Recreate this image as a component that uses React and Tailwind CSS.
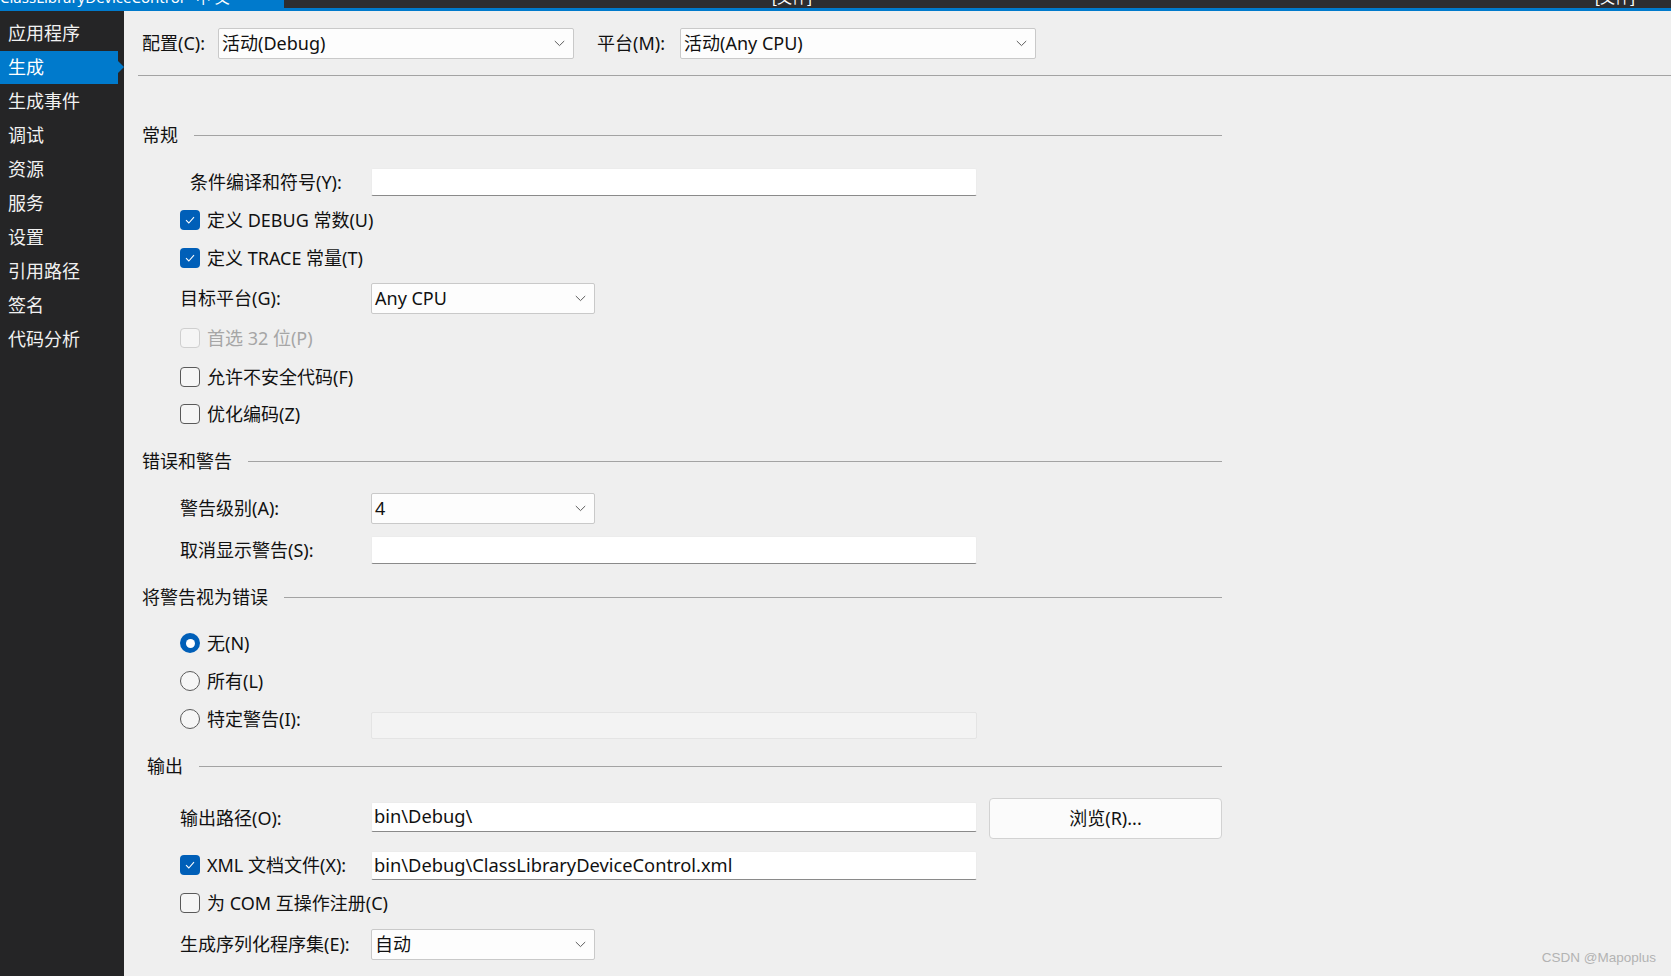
import React from "react";

const FONT = { fontFamily: '"Noto Sans", "Noto Sans CJK SC", sans-serif' };

function Chevron() {
  return (
    <svg width="11" height="7" viewBox="0 0 11 7" className="shrink-0">
      <path d="M0.8 1 L5.5 5.6 L10.2 1" fill="none" stroke="#5c5c5c" strokeWidth="1" />
    </svg>
  );
}

function Dropdown({ value, w, h = 31 }) {
  return (
    <div
      className="flex items-center justify-between bg-[#fdfdfd] border border-[#c9c9c9] rounded-[2px] pl-[3px] pr-[8px]"
      style={{ width: w, height: h }}
    >
      <span className="text-[18px] text-[#111]">{value}</span>
      <Chevron />
    </div>
  );
}

function TextInput({ value = "", h = 28, disabled = false }) {
  return (
    <div
      className={
        disabled
          ? "w-[606px] flex items-center bg-[#f3f3f3] border border-[#e4e4e4] rounded-[2px]"
          : "w-[606px] flex items-center bg-white border border-[#ececec] border-b-[#8a8a8a] rounded-[2px] pl-[2px]"
      }
      style={{ height: h }}
    >
      <span className="text-[18.3px] text-[#111] leading-none">{value}</span>
    </div>
  );
}

function Checkbox({ checked, disabled }) {
  if (checked) {
    return (
      <div className="w-[20px] h-[20px] rounded-[4px] bg-[#005fb8] flex items-center justify-center shrink-0">
        <svg width="12" height="10" viewBox="0 0 12 10">
          <path d="M2 5.2 L4.8 8 L10 2.2" fill="none" stroke="white" strokeWidth="1.1" />
        </svg>
      </div>
    );
  }
  return (
    <div
      className={
        disabled
          ? "w-[20px] h-[20px] rounded-[4px] border border-[#cfcfcf] bg-[#f5f5f5] shrink-0"
          : "w-[20px] h-[20px] rounded-[4px] border border-[#5a5a5a] bg-[#f6f6f6] shrink-0"
      }
    />
  );
}

function Radio({ checked }) {
  if (checked) {
    return (
      <div className="w-[20px] h-[20px] rounded-full bg-[#005fb8] flex items-center justify-center shrink-0">
        <div className="w-[9px] h-[9px] rounded-full bg-white" />
      </div>
    );
  }
  return <div className="w-[20px] h-[20px] rounded-full border border-[#5a5a5a] bg-[#f6f6f6] shrink-0" />;
}

function Heading({ text, className = "", indent = 0 }) {
  return (
    <div className={"flex items-center h-[30px] " + className}>
      <span className="text-[18px] text-[#111] whitespace-nowrap" style={{ marginLeft: indent }}>
        {text}
      </span>
      <div className="flex-1 ml-[16px] h-px bg-[#a3a3a3]" />
    </div>
  );
}

function CheckRow({ label, checked, disabled, className = "" }) {
  return (
    <div className={"flex items-center gap-[7px] h-[36px] pl-[38px] " + className}>
      <Checkbox checked={checked} disabled={disabled} />
      <span className={disabled ? "text-[18px] text-[#a6a6a6]" : "text-[18px] text-[#111]"}>{label}</span>
    </div>
  );
}

function RadioRow({ label, checked, className = "" }) {
  return (
    <div className={"flex items-center gap-[7px] h-[36px] pl-[38px] " + className}>
      <Radio checked={checked} />
      <span className="text-[18px] text-[#111]">{label}</span>
    </div>
  );
}

const NAV = ["应用程序", "生成", "生成事件", "调试", "资源", "服务", "设置", "引用路径", "签名", "代码分析"];

export default function App() {
  return (
    <div className="relative w-[1671px] h-[976px] overflow-hidden flex flex-col bg-[#efefef]" style={FONT}>
      {/* top title strip */}
      <div className="flex h-[8px] shrink-0 overflow-hidden">
        <div className="w-[284px] bg-[#007acc] overflow-hidden relative">
          <span className="absolute left-[0px] top-[-11px] text-[15px] text-white whitespace-nowrap leading-[16px]">
            ClassLibraryDeviceControl* 中 文
          </span>
        </div>
        <div className="flex-1 bg-[#2d2d30] relative overflow-hidden">
          <span className="absolute left-[488px] top-[-11px] text-[15px] text-white whitespace-nowrap leading-[16px]">
            [文件]
          </span>
          <span className="absolute left-[1311px] top-[-11px] text-[15px] text-white whitespace-nowrap leading-[16px]">
            [文件]
          </span>
        </div>
      </div>
      <div className="h-[3px] bg-[#007acc] shrink-0" />

      <div className="flex flex-1">
        {/* sidebar */}
        <div className="w-[124px] bg-[#252526] pt-[5px] flex flex-col">
          {NAV.map((n) =>
            n === "生成" ? (
              <div key={n} className="flex items-center h-[34px]">
                <div className="w-[118px] h-[33px] bg-[#007acc] flex items-center pl-[8px]">
                  <span className="text-[18px] text-white">{n}</span>
                </div>
                <svg width="6" height="12" viewBox="0 0 6 12">
                  <path d="M0 0 L6 6 L0 12 Z" fill="#007acc" />
                </svg>
              </div>
            ) : (
              <div key={n} className="flex items-center h-[34px] pl-[8px]">
                <span className="text-[18px] text-[#f1f1f1]">{n}</span>
              </div>
            )
          )}
        </div>

        {/* content */}
        <div className="flex-1 flex flex-col">
          <div className="flex items-center h-[31px] mt-[17px] pl-[18px]">
            <span className="w-[76px] text-[18px] text-[#111]">配置(C):</span>
            <Dropdown value="活动(Debug)" w={356} />
            <span className="ml-[23px] w-[83px] text-[18px] text-[#111]">平台(M):</span>
            <Dropdown value="活动(Any CPU)" w={356} />
          </div>
          <div className="mt-[16px] ml-[14px] h-px bg-[#a3a3a3]" />

          <div className="pl-[18px] w-[1098px] flex flex-col">
            <Heading text="常规" className="mt-[44px]" />

            <div className="flex items-center h-[28px] mt-[18px] pl-[38px]">
              <span className="w-[191px] pl-[10px] text-[18px] text-[#111]">条件编译和符号(Y):</span>
              <TextInput />
            </div>

            <CheckRow label="定义 DEBUG 常数(U)" checked className="mt-[6px]" />
            <CheckRow label="定义 TRACE 常量(T)" checked className="mt-[2px]" />

            <div className="flex items-center h-[31px] mt-[7px] pl-[38px]">
              <span className="w-[191px] text-[18px] text-[#111]">目标平台(G):</span>
              <Dropdown value="Any CPU" w={224} />
            </div>

            <CheckRow label="首选 32 位(P)" disabled className="mt-[6px]" />
            <CheckRow label="允许不安全代码(F)" className="mt-[3px]" />
            <CheckRow label="优化编码(Z)" className="mt-[1px]" />

            <Heading text="错误和警告" className="mt-[14px]" />

            <div className="flex items-center h-[31px] mt-[17px] pl-[38px]">
              <span className="w-[191px] text-[18px] text-[#111]">警告级别(A):</span>
              <Dropdown value="4" w={224} />
            </div>

            <div className="flex items-center h-[28px] mt-[12px] pl-[38px]">
              <span className="w-[191px] text-[18px] text-[#111]">取消显示警告(S):</span>
              <TextInput />
            </div>

            <Heading text="将警告视为错误" className="mt-[18px]" />

            <RadioRow label="无(N)" checked className="mt-[13px]" />
            <RadioRow label="所有(L)" className="mt-[2px]" />

            <div className="flex items-start h-[38px] mt-[2px] pl-[38px]">
              <div className="w-[191px] h-[36px] flex items-center gap-[7px]">
                <Radio />
                <span className="text-[18px] text-[#111]">特定警告(I):</span>
              </div>
              <div className="mt-[11px]">
                <TextInput disabled h={27} />
              </div>
            </div>

            <Heading text="输出" indent={5} className="mt-[12px]" />

            <div className="flex items-center h-[41px] mt-[17px] pl-[38px]">
              <span className="w-[191px] text-[18px] text-[#111]">输出路径(O):</span>
              <div className="-mt-[4px]">
                <TextInput value="bin\Debug\" h={30} />
              </div>
              <div className="ml-[12px] w-[233px] h-[41px] bg-[#fbfbfb] border border-[#d2d2d2] rounded-[4px] flex items-center justify-center">
                <span className="text-[18px] text-[#111]">浏览(R)...</span>
              </div>
            </div>

            <div className="flex items-center h-[30px] mt-[11px] pl-[38px]">
              <div className="w-[191px] flex items-center gap-[7px]">
                <Checkbox checked />
                <span className="text-[18px] text-[#111]">XML 文档文件(X):</span>
              </div>
              <TextInput value="bin\Debug\ClassLibraryDeviceControl.xml" h={29} />
            </div>

            <CheckRow label="为 COM 互操作注册(C)" className="mt-[5px]" />

            <div className="flex items-center h-[31px] mt-[8px] pl-[38px]">
              <span className="w-[191px] text-[18px] text-[#111]">生成序列化程序集(E):</span>
              <Dropdown value="自动" w={224} />
            </div>
          </div>
        </div>
      </div>

      <span
        className="absolute right-[15px] bottom-[8px] text-[13.5px] text-[#b3b3b3]"
        style={{ fontFamily: '"Liberation Sans", sans-serif' }}
      >
        CSDN @Mapoplus
      </span>
    </div>
  );
}
